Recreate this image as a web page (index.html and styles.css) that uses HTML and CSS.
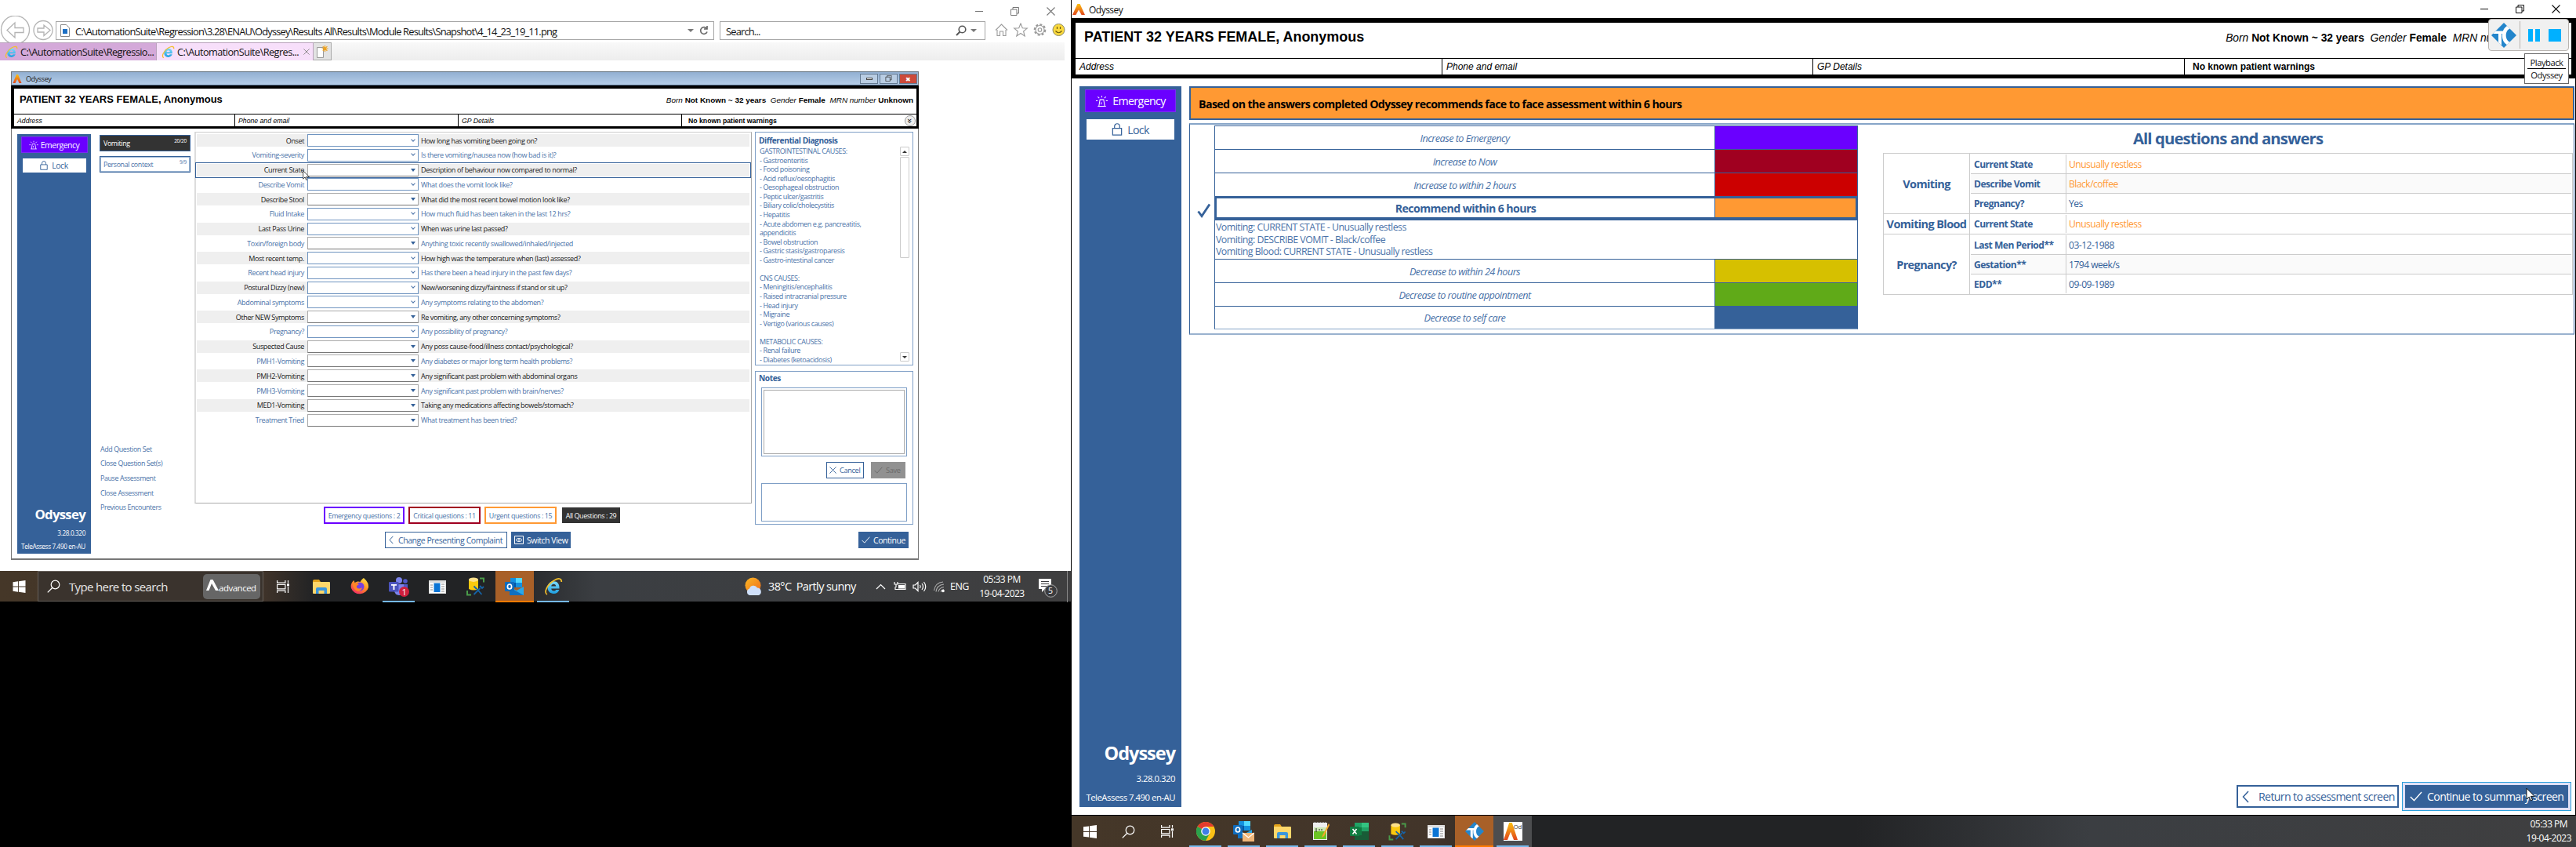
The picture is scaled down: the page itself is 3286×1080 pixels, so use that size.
FILE: index.html
```html
<!DOCTYPE html>
<html lang="en">
<head>
<meta charset="utf-8">
<title>Odyssey</title>
<link rel="stylesheet" href="styles.css">
</head>
<body>
<svg class="defs" width="0" height="0">
  <defs>
    <linearGradient id="flame" x1="0" y1="0" x2="0" y2="1"><stop offset="0" stop-color="#fdc010"/><stop offset="1" stop-color="#e0461c"/></linearGradient>
    <linearGradient id="ieblue" x1="0" y1="0" x2="0" y2="1"><stop offset="0" stop-color="#7fdcfb"/><stop offset="1" stop-color="#1e9fe0"/></linearGradient>
    <linearGradient id="fire" x1="0.8" y1="0" x2="0.2" y2="1"><stop offset="0" stop-color="#ffe040"/><stop offset=".5" stop-color="#ff8a25"/><stop offset="1" stop-color="#f5246c"/></linearGradient>
    <linearGradient id="sun" x1="0" y1="0" x2="1" y2="1"><stop offset="0" stop-color="#fbb824"/><stop offset="1" stop-color="#ef6c1a"/></linearGradient>
    <clipPath id="diamond"><path d="M16 0 32 16 16 32 0 16z"/></clipPath>
  </defs>
  <symbol id="logo" viewBox="0 0 16 16"><path d="M6.4 0h3.2L16 16h-4.400L8 8.500 4.400 16H0z" fill="url(#flame)"/></symbol>
  <symbol id="ie" viewBox="0 0 24 24"><path d="M19.500 14.500H9.200c.3 2 1.500 3 3.200 3 1.300 0 2.200-.5 2.800-1.500h4.200c-1 3-3.600 5-7.100 5-4.600 0-7.800-3.200-7.800-7.900 0-4.600 3.300-7.900 7.800-7.900 4.700 0 7.600 3.300 7.200 9.300zM9.200 11.500h6c-.2-1.700-1.300-2.700-2.900-2.700s-2.700 1-3.100 2.700z" fill="url(#ieblue)"/><path d="M4 22C-1 20 4 9 13 4c5-3 9.500-3 9.300 2" fill="none" stroke="#f2bf2c" stroke-width="1.700"/></symbol>
  <symbol id="alarm" viewBox="0 0 17 17"><path d="M3 15.500h11M4.500 15.500 6 6.500h5l1.500 9M8.500 1v2.500M3 2.500l2 2M14 2.500l-2 2M.5 8H3M14 8h2.500M8 10l-.5 3" fill="none" stroke="currentColor" stroke-width="1.100"/></symbol>
  <symbol id="lock" viewBox="0 0 14 17"><path d="M1 7h12v9H1zM3.500 7V4.500a3.500 3.700 0 0 1 7 0V7" fill="none" stroke="currentColor" stroke-width="1.300"/></symbol>
  <symbol id="check" viewBox="0 0 16 13"><path d="M.8 7 5.500 11.800 15 1" fill="none" stroke="currentColor" stroke-width="1.400"/></symbol>
  <symbol id="back" viewBox="0 0 9 16"><path d="M8 1 1.500 8 8 15" fill="none" stroke="currentColor" stroke-width="1.500"/></symbol>
  <symbol id="cursor" viewBox="0 0 13 20"><path d="M1 1v15l3.500-3.200L6.800 18l2.400-1-2.300-5H12z" fill="#fff" stroke="#000" stroke-width="1"/></symbol>
  <symbol id="win" viewBox="0 0 16 16"><path d="M0 2.200 6.600 1.300v6.200H0zM7.500 1.200 16 0v7.500H7.500zM0 8.400h6.600v6.300L0 13.800zM7.500 8.400H16V16l-8.500-1.200z" fill="#fff"/></symbol>
  <symbol id="search" viewBox="0 0 17 17"><circle cx="10.500" cy="6.500" r="5.300" fill="none" stroke="#fff" stroke-width="1.200"/><path d="M6.700 10.500.8 16.400" stroke="#fff" stroke-width="1.300"/></symbol>
  <symbol id="task" viewBox="0 0 16 16"><path d="M.6 0v3.200h10.300V0M.6 5.500h10.300v5.300H.6zM.6 16v-2.800h10.300V16M14.500 0v3.500M14.500 8v8" fill="none" stroke="#fff" stroke-width="1.200"/><path d="M13 4.300h3v3h-3z" fill="#fff"/></symbol>
  <symbol id="folder" viewBox="0 0 22 18"><path d="M0 2a2 2 0 0 1 2-2h6l2 3v14H0z" fill="#e2a21b"/><rect y="3" width="22" height="15" rx="1" fill="#fdd76b"/><path d="M4 18v-6q0-2 2-2h10q2 0 2 2v6h-3.500v-4h-7v4z" fill="#3a96dd"/></symbol>
  <symbol id="firefox" viewBox="0 0 24 24"><path d="M17 1c3 3 6.500 6 6 12a11.500 11 0 0 1-22 1C0 9 2 6 4.500 4l1 3c2-1.500 5-2 7-1 1-2 2.500-4 4.500-5z" fill="url(#fire)"/><circle cx="12" cy="12" r="5.500" fill="#7540e0"/><path d="M3 8c3-2 5-1 8 1l-3 2c-1 3 3 5 7 2-1 5-6 6-9 3-2-2-3-5-3-8z" fill="#ff8526"/></symbol>
  <symbol id="teams" viewBox="0 0 26 25"><circle cx="13" cy="4" r="4" fill="#7b83eb"/><circle cx="21" cy="5" r="2.800" fill="#5059c9"/><path d="M16 9h8v7a5 5 0 0 1-8 4z" fill="#5059c9"/><path d="M7 9h12v8a6 6 0 0 1-12 0z" fill="#7b83eb"/><rect y="6" width="12.500" height="12.500" rx="1" fill="#4b53bc"/><path d="M3 9h7v1.800H7.400V16H5.500v-5.200H3z" fill="#fff"/><circle cx="19.500" cy="18.500" r="6.500" fill="#cf1f3c"/></symbol>
  <symbol id="app" viewBox="0 0 22 17"><path d="M0 0h22v17H0z" fill="#ddd"/><path d="M1 3h20v13H1z" fill="#fff"/><path d="M6.500 3.500h8v11.500h-8z" fill="#0a74d4"/><path d="M2 6h3M2 9h3M2 12h3M16 5h4M16 8h4M16 11h4M16 14h4" stroke="#888"/></symbol>
  <symbol id="db" viewBox="0 0 24 24"><path d="M3 3v12q6 3 12 0V3z" fill="#fbc90e"/><ellipse cx="9" cy="3.200" rx="6" ry="2.700" fill="#fce08a"/><path d="M17 1.500h5v5M1 17v5.500h5" fill="none" stroke="#4a9c4a" stroke-width="2"/><path d="m9.500 22 8-8M12.500 14l7 8M9.500 11.500l3 3M17 11l3 3 2-2" stroke="#1664a8" stroke-width="1.800" fill="none"/></symbol>
  <symbol id="outlook" viewBox="0 0 24 22"><path d="M7 0h15v12H7z" fill="#1490df"/><path d="M14 0h8v6h-8z" fill="#50d9ff"/><path d="M7 6h7v6H7z" fill="#0358a7"/><path d="m6 11 9 5 9-5v11H6z" fill="#28a8ea"/><path d="m6 12 18 10H6z" fill="#1070c0"/><rect y="5" width="12" height="12" rx="1" fill="#0f6cbd"/><ellipse cx="6" cy="11" rx="2.600" ry="3" fill="none" stroke="#fff" stroke-width="1.700"/></symbol>
  <symbol id="tc" viewBox="0 0 32 32"><g clip-path="url(#diamond)"><path d="M0 0h32v32H0z" fill="#2385cb"/><path d="M0 10.500h19V14h-6v14H9V14H0zM27 7c-11-1-11 19 0 18l-3 4c-14-1-13-25 0-26z" fill="#fff"/></g></symbol>
  <symbol id="restore" viewBox="0 0 11 11"><path d="M.5 3h7.500v7.500H.5zM3 3V.5h7.500V8H8" fill="none" stroke="currentColor"/></symbol>
  <symbol id="cross" viewBox="0 0 11 11"><path d="m.5.5 10 10M10.500.5l-10 10" fill="none" stroke="currentColor" stroke-width="1.100"/></symbol>
</svg>

<main class="desk">
<section class="left">
  <div class="ie">
    <div class="caption"><i class="min"></i><svg width="11" height="11"><use href="#restore"/></svg><svg width="11" height="11"><use href="#cross"/></svg></div>
    <div class="nav">
      <svg class="arrows" width="70" height="34" viewBox="0 0 70 34"><g fill="none" stroke="#b4b4b4" stroke-width="1.300"><circle cx="19.500" cy="18" r="18"/><path d="M9 18.500 19 9v6.500h11v6H19V28zM64 18.500 56 12v4h-8v5h8v4.500z"/><circle cx="55" cy="18.500" r="12"/></g></svg>
      <div class="addr"><svg width="12" height="16" viewBox="0 0 12 16"><path d="M.5.5h7l4 4v11H.5z" fill="#fff" stroke="#888"/><path d="M3 6h6v6H3z" fill="#1c6fc4"/></svg><span>C:\AutomationSuite\Regression\3.28\ENAU\Odyssey\Results All\Results\Module Results\Snapshot\4_14_23_19_11.png</span><b class="dd"></b><svg width="12" height="14" viewBox="0 0 12 14"><path d="M9.500 4.500A4.300 4.300 0 1 0 10 8.500M10 1v4H6" fill="none" stroke="#6a6a6a" stroke-width="1.700"/></svg></div>
      <div class="find"><span>Search...</span><svg width="14" height="14" viewBox="0 0 14 14"><circle cx="8.500" cy="5.500" r="4.300" fill="none" stroke="#555" stroke-width="1.600"/><path d="M5.500 8.500 1 13" stroke="#555" stroke-width="2"/></svg><b class="dd"></b></div>
      <svg class="tools" width="92" height="18" viewBox="0 0 92 18"><g fill="#fff" stroke="#9a9a9a" stroke-width="1.100"><path d="M3 9v7.500h3.500V11h4v5.500H14V9M1 9.500 8.500 2l7.500 7.500"/><path d="m33 1 2.300 5.800 6 .3-4.700 3.900 1.600 6L33 13.500 27.800 17l1.600-6L24.700 7.100l6-.3z"/><circle cx="57.500" cy="9" r="6.700" stroke-dasharray="3 2.200" stroke-width="2.200"/><circle cx="57.500" cy="9" r="5.500"/><circle cx="57.500" cy="9" r="2.300"/></g><circle cx="81.500" cy="9" r="7.500" fill="#fbd93d" stroke="#8a8a6a"/><path d="M79.500 5v3M83.500 5v3M77.500 10.500q4 4.500 8 0" fill="none" stroke="#6a5a10" stroke-width="1.200"/></svg>
    </div>
    <div class="tabs">
      <div class="tab off"><svg width="17" height="17"><use href="#ie"/></svg><span>C:\AutomationSuite\Regressio...</span></div>
      <div class="tab on"><svg width="17" height="17"><use href="#ie"/></svg><span>C:\AutomationSuite\Regres...</span><svg class="x" width="8" height="8"><use href="#cross"/></svg></div>
      <div class="newtab"><svg width="16" height="17" viewBox="0 0 16 17"><path d="M1.500 2.500h8v13h-8z" fill="#fff" stroke="#999"/><path d="M11.500 0v8M7.500 4h8M8.800 1.200l5.600 5.600M14.400 1.200 8.800 6.800" stroke="#f0a21c" stroke-width="1.200"/></svg></div>
    </div>
  </div>

  <div class="snap">
    <div class="bar"><svg width="12" height="11"><use href="#logo"/></svg><span>Odyssey</span><i class="wb"><u></u></i><i class="wb"><svg width="9" height="8"><use href="#restore"/></svg></i><i class="wb red">✖</i></div>
    <div class="phead">
      <div class="who"><b>PATIENT 32 YEARS FEMALE, Anonymous</b><span class="facts"><em>Born</em> <b>Not Known ~ 32 years</b>&nbsp; <em>Gender</em> <b>Female</b>&nbsp; <em>MRN number</em> <b>Unknown</b></span></div>
      <div class="cells"><em>Address</em><em>Phone and email</em><em>GP Details</em><b>No known patient warnings</b><i>»</i></div>
    </div>
    <div class="work">
      <aside class="side">
        <div class="emer"><svg width="12" height="12"><use href="#alarm"/></svg><span>Emergency</span></div>
        <div class="lock"><svg width="10" height="12"><use href="#lock"/></svg><span>Lock</span></div>
        <div class="ver"><b>Odyssey</b><span>3.28.0.320</span><span>TeleAssess 7.490 en-AU</span></div>
      </aside>
      <nav class="sets">
        <div class="set dark"><span>Vomiting</span><sup>20/20</sup></div>
        <div class="set"><span>Personal context</span><sup>9/9</sup></div>
        <div class="links"><span>Add Question Set</span><span>Close Question Set(s)</span><span>Pause Assessment</span><span>Close Assessment</span><span>Previous Encounters</span></div>
      </nav>
      <div class="mid">
        <div class="qs">
          <div class="q"><span>Onset</span><i class="a"></i><span>How long has vomiting been going on?</span></div>
          <div class="q"><span>Vomiting-severity</span><i class="a"></i><span>Is there vomiting/nausea now (how bad is it)?</span></div>
          <div class="q cur"><span>Current State</span><i></i><span>Description of behaviour now compared to normal?</span><svg class="ptr" width="9" height="14"><use href="#cursor"/></svg></div>
          <div class="q"><span>Describe Vomit</span><i class="a"></i><span>What does the vomit look like?</span></div>
          <div class="q"><span>Describe Stool</span><i></i><span>What did the most recent bowel motion look like?</span></div>
          <div class="q"><span>Fluid Intake</span><i class="a"></i><span>How much fluid has been taken in the last 12 hrs?</span></div>
          <div class="q"><span>Last Pass Urine</span><i class="a"></i><span>When was urine last passed?</span></div>
          <div class="q"><span>Toxin/foreign body</span><i></i><span>Anything toxic recently swallowed/inhaled/injected</span></div>
          <div class="q"><span>Most recent temp.</span><i class="a"></i><span>How high was the temperature when (last) assessed?</span></div>
          <div class="q"><span>Recent head injury</span><i class="a"></i><span>Has there been a head injury in the past few days?</span></div>
          <div class="q"><span>Postural Dizzy (new)</span><i class="a"></i><span>New/worsening dizzy/faintness if stand or sit up?</span></div>
          <div class="q"><span>Abdominal symptoms</span><i class="a"></i><span>Any symptoms relating to the abdomen?</span></div>
          <div class="q"><span>Other NEW Symptoms</span><i></i><span>Re vomiting, any other concerning symptoms?</span></div>
          <div class="q"><span>Pregnancy?</span><i class="a"></i><span>Any possibility of pregnancy?</span></div>
          <div class="q"><span>Suspected Cause</span><i></i><span>Any poss cause-food/illness contact/psychological?</span></div>
          <div class="q"><span>PMH1-Vomiting</span><i></i><span>Any diabetes or major long term health problems?</span></div>
          <div class="q"><span>PMH2-Vomiting</span><i></i><span>Any significant past problem with abdominal organs</span></div>
          <div class="q"><span>PMH3-Vomiting</span><i></i><span>Any significant past problem with brain/nerves?</span></div>
          <div class="q"><span>MED1-Vomiting</span><i></i><span>Taking any medications affecting bowels/stomach?</span></div>
          <div class="q"><span>Treatment Tried</span><i></i><span>What treatment has been tried?</span></div>
        </div>
        <div class="filters"><span class="f1"><b>Emergency questions : 2</b></span><span class="f2"><b>Critical questions : 11</b></span><span class="f3"><b>Urgent questions : 15</b></span><span class="f4"><b>All Questions : 29</b></span></div>
        <div class="acts"><span class="btn chg"><svg width="6" height="11"><use href="#back"/></svg><b>Change Presenting Complaint</b></span><span class="btn fill"><svg width="12" height="11" viewBox="0 0 12 11"><path d="M.5.5h11v10H.5z" fill="none" stroke="#fff"/><ellipse cx="6" cy="5.500" rx="3.500" ry="2" fill="none" stroke="#fff"/><circle cx="6" cy="5.500" r="1" fill="#fff"/></svg><b>Switch View</b></span></div>
      </div>
      <div class="rail">
        <div class="diff"><h4>Differential Diagnosis</h4>
<pre>GASTROINTESTINAL CAUSES:
- Gastroenteritis
- Food poisoning
- Acid reflux/oesophagitis
- Oesophageal obstruction
- Peptic ulcer/gastritis
- Biliary colic/cholecystitis
- Hepatitis
- Acute abdomen e.g. pancreatitis,
appendicitis
- Bowel obstruction
- Gastric stasis/gastroparesis
- Gastro-intestinal cancer

CNS CAUSES:
- Meningitis/encephalitis
- Raised intracranial pressure
- Head injury
- Migraine
- Vertigo (various causes)

METABOLIC CAUSES:
- Renal failure
- Diabetes (ketoacidosis)</pre>
          <div class="scroll"><i class="up"></i><i class="thumb"></i><i class="down"></i></div>
        </div>
        <div class="notes"><h4>Notes</h4><div class="ta"><div></div></div>
          <div class="nb"><span class="btn"><svg width="9" height="9"><use href="#cross"/></svg><b>Cancel</b></span><span class="btn grey"><svg width="11" height="9"><use href="#check"/></svg><b>Save</b></span></div>
          <div class="box"></div></div>
        <span class="btn fill cont"><svg width="11" height="9"><use href="#check"/></svg><b>Continue</b></span>
      </div>
    </div>
  </div>

  <footer class="tb tbl">
    <div class="slot start"><svg width="17" height="16"><use href="#win"/></svg></div>
    <div class="sbox"><svg width="17" height="17"><use href="#search"/></svg><span>Type here to search</span><div class="chip"><svg width="16" height="14" viewBox="0 0 16 14"><path d="M5.500 0h3L16 14h-4L7 5l-3.500 9H0z" fill="#fff"/></svg><span>advanced</span></div></div>
    <div class="slot"><svg width="16" height="16"><use href="#task"/></svg></div>
    <div class="slot"><svg width="22" height="18"><use href="#folder"/></svg></div>
    <div class="slot"><svg width="24" height="24"><use href="#firefox"/></svg></div>
    <div class="slot run"><svg width="26" height="25"><use href="#teams"/></svg><small>1</small></div>
    <div class="slot"><svg width="22" height="17"><use href="#app"/></svg></div>
    <div class="slot"><svg width="24" height="24"><use href="#db"/></svg></div>
    <div class="slot hot"><svg width="24" height="22"><use href="#outlook"/></svg></div>
    <div class="slot run"><svg width="24" height="24"><use href="#ie"/></svg></div>
    <div class="tray">
      <svg width="24" height="24" viewBox="0 0 24 24"><circle cx="10.500" cy="10.500" r="10" fill="url(#sun)"/><path d="M6 23a4.500 4.500 0 0 1 0-8.500 5.500 5.500 0 0 1 10-1 5 5 0 0 1 2 9.500z" fill="#cfe0fa"/></svg>
      <span class="wx">38°C&nbsp; Partly sunny</span>
      <svg class="ic" width="105" height="18" viewBox="0 0 105 18"><g fill="none" stroke="#fff" stroke-width="1.200"><path d="M1 12 6.500 6.500 12 12"/><path d="M28 5.500h10v7H25v-3M24 3v3h4V3M26 6v4"/><path d="M29.500 7.500h7v3.500h-7z" fill="#fff"/><path d="M48 7h2.500L54 3.500v11L50.500 11H48zM56.500 7q1.500 2 0 4M59 5q3 4 0 8M61.500 3q4.500 6 0 12"/><path d="M77 15.500Q78 7 87 6M80 15.500q1-5 7-6M83 15.500q1-2.500 4-3M74.500 14Q76 4 86 3" stroke="#aaa"/><circle cx="86" cy="14.500" r="1.200" fill="#fff"/></g></svg>
      <span class="eng">ENG</span>
      <div class="clock"><span>05:33 PM</span><span>19-04-2023</span></div>
      <div class="note"><svg width="24" height="24" viewBox="0 0 24 24"><path d="M0 0h16v13H8l-4 4v-4H0z" fill="#fff"/><path d="M3 3.500h10M3 6.500h10M3 9.500h7" stroke="#3b3c3f"/><circle cx="15.500" cy="15.500" r="7.800" fill="#3b3c3f" stroke="#aaa"/></svg><small>5</small></div>
      <i class="peek"></i>
    </div>
  </footer>
</section>

<section class="right">
  <div class="title"><svg width="16" height="14" viewBox="0 0 16 16" preserveAspectRatio="none"><use href="#logo"/></svg><span>Odyssey</span><i class="min"></i><svg width="11" height="11"><use href="#restore"/></svg><svg width="11" height="11"><use href="#cross"/></svg></div>
  <div class="phead big">
    <div class="who"><b>PATIENT 32 YEARS FEMALE, Anonymous</b><span class="facts"><em>Born</em> <b>Not Known ~ 32 years</b>&nbsp; <em>Gender</em> <b>Female</b>&nbsp; <em>MRN number</em></span></div>
    <div class="cells"><em>Address</em><em>Phone and email</em><em>GP Details</em><b>No known patient warnings</b></div>
  </div>
  <div class="stage">
    <aside class="side large">
      <div class="emer"><svg width="17" height="16"><use href="#alarm"/></svg><span>Emergency</span></div>
      <div class="lock"><svg width="14" height="16"><use href="#lock"/></svg><span>Lock</span></div>
      <div class="ver"><b>Odyssey</b><span>3.28.0.320</span><span>TeleAssess 7.490 en-AU</span></div>
    </aside>
    <div class="main">
      <div class="banner"><b>Based on the answers completed Odyssey recommends face to face assessment within 6 hours</b></div>
      <div class="panel">
        <div class="tick"><svg width="18" height="19" viewBox="0 0 18 19"><path d="M1.500 10.500 6 16.500 16 1.500" fill="none" stroke="#356199" stroke-width="2.800"/></svg></div>
        <div class="levels">
          <div class="lv"><em>Increase to Emergency</em><i class="c1"></i></div>
          <div class="lv"><em>Increase to Now</em><i class="c2"></i></div>
          <div class="lv"><em>Increase to within 2 hours</em><i class="c3"></i></div>
          <div class="lv rec"><b>Recommend within 6 hours</b><i class="c4"></i></div>
          <div class="why"><span>Vomiting: CURRENT STATE - Unusually restless</span><span>Vomiting: DESCRIBE VOMIT - Black/coffee</span><span>Vomiting Blood: CURRENT STATE - Unusually restless</span></div>
          <div class="lv"><em>Decrease to within 24 hours</em><i class="c5"></i></div>
          <div class="lv"><em>Decrease to routine appointment</em><i class="c6"></i></div>
          <div class="lv last"><em>Decrease to self care</em><i class="c7"></i></div>
        </div>
        <div class="qa">
          <h2>All questions and answers</h2>
          <div class="grp g3"><b>Vomiting</b><div><p><b>Current State</b><span class="o">Unusually restless</span></p><p class="alt"><b>Describe Vomit</b><span class="o">Black/coffee</span></p><p><b>Pregnancy?</b><span>Yes</span></p></div></div>
          <div class="grp g1"><b>Vomiting Blood</b><div><p><b>Current State</b><span class="o">Unusually restless</span></p></div></div>
          <div class="grp g3"><b>Pregnancy?</b><div><p><b>Last Men Period**</b><span>03-12-1988</span></p><p class="alt"><b>Gestation**</b><span>1794 week/s</span></p><p><b>EDD**</b><span>09-09-1989</span></p></div></div>
        </div>
      </div>
      <div class="foot">
        <span class="btn lg"><svg width="9" height="16"><use href="#back"/></svg><b>Return to assessment screen</b></span>
        <span class="halo"><span class="btn lg fill"><svg width="16" height="13"><use href="#check"/></svg><b>Continue to summary screen</b></span><svg class="ptr2" width="12" height="19"><use href="#cursor"/></svg></span>
      </div>
    </div>
  </div>
  <footer class="tb tbr">
    <div class="slot"><svg width="17" height="17"><use href="#win"/></svg></div>
    <div class="slot"><svg width="17" height="17"><use href="#search"/></svg></div>
    <div class="slot"><svg width="16" height="16"><use href="#task"/></svg></div>
    <div class="slot run"><svg width="24" height="24" viewBox="0 0 24 24"><circle cx="12" cy="12" r="12" fill="#fbc116"/><path d="M12 12 1.600 6A12 12 0 0 1 22.400 6z" fill="#e33b2e"/><path d="M12 12 1.600 6A12 12 0 0 0 12 24l5-9z" fill="#2ba24c"/><path d="M12 6h10.400L17 15z" fill="#fbc116"/><circle cx="12" cy="12" r="5.800" fill="#fff"/><circle cx="12" cy="12" r="4.500" fill="#3f7ee8"/></svg></div>
    <div class="slot run"><svg width="27" height="26" viewBox="0 0 27 26"><svg width="24" height="22"><use href="#outlook"/></svg><path d="M12 15h15v11H12z" fill="#f0b77a"/><path d="m12 15 7.500 6 7.500-6" fill="none" stroke="#fff" stroke-width="1.300"/></svg></div>
    <div class="slot run"><svg width="22" height="18"><use href="#folder"/></svg></div>
    <div class="slot run"><svg width="22" height="24" viewBox="0 0 22 24"><path d="M1 1h18v22H1z" fill="#eee"/><path d="M2 12h16v10H2z" fill="#6cc424"/><path d="M2 7h16v5H2z" fill="#cde8b4"/><path d="M5 8v5M8 10h2M11 10h2" stroke="#222"/><path d="M21 2 13 17l-1 3 3-2 7-14z" fill="#f3a62a"/><path d="M2 .5h16" stroke="#888" stroke-dasharray="1 1"/></svg></div>
    <div class="slot run"><svg width="24" height="22" viewBox="0 0 24 22"><path d="M6 0h18v22H6z" fill="#21a366"/><path d="M15 0h9v6h-9z" fill="#33c481"/><path d="M6 6h9v10H6z" fill="#107c41"/><path d="M15 11h9v11H6v-6h9z" fill="#185c37"/><rect y="5" width="12" height="12" rx="1" fill="#107c41"/><path d="m3.500 8 5 6.500M8.500 8l-5 6.500" stroke="#fff" stroke-width="1.600"/></svg></div>
    <div class="slot run"><svg width="24" height="23"><use href="#db"/></svg></div>
    <div class="slot run"><svg width="22" height="17"><use href="#app"/></svg></div>
    <div class="slot hot"><svg width="24" height="24"><use href="#tc"/></svg></div>
    <div class="slot run act"><div class="od"><svg width="18" height="22" viewBox="0 0 16 16" preserveAspectRatio="none"><use href="#logo"/></svg><small>Od</small></div></div>
    <div class="clock"><span>05:33 PM</span><span>19-04-2023</span></div>
  </footer>
  <div class="play"><svg width="32" height="32"><use href="#tc"/></svg><i class="sep"></i><i class="p"></i><i class="p"></i><i class="s"></i></div>
  <div class="tip"><span>Playback</span><span>Odyssey</span></div>
</section>
</main>
</body>
</html>
```
FILE: styles.css
```css
* { box-sizing: border-box; letter-spacing: -.043em; }
body { margin: 0; background: #000; font-family: "Open Sans", "Noto Sans", sans-serif; color: #356199; overflow: hidden; }
svg { display: block; flex: none; }
i, em { font-style: normal; }
.defs { position: absolute; }
.desk { display: grid; grid-template-columns: 1366px 1920px; width: 3286px; height: 1080px; }
.left { height: 768px; background: #fff; display: flex; flex-direction: column; width: 1366px; white-space: nowrap; }
.right { position: relative; height: 1080px; background: #fff; border-left: 1px solid #000; display: flex; flex-direction: column; white-space: nowrap; overflow: hidden; }

/* browser chrome */
.ie { height: 91px; flex: none; color: #111; }
.caption { height: 20px; display: flex; justify-content: flex-end; align-items: flex-end; gap: 35px; padding: 0 20px 0 0; color: #777; }
.min { width: 10px; height: 1px; background: currentColor; align-self: flex-end; margin-bottom: 5px; }
.nav { height: 34px; display: flex; }
.addr, .find { height: 24px; margin-top: 7px; border: 1px solid #a6a6a6; display: flex; align-items: center; font-size: 12.900px; }
.addr span, .find span { letter-spacing: -.064em; padding-top: 1px; }
.addr { width: 840px; margin-left: 1px; padding-left: 5px; gap: 7px; }
.addr .dd { margin-left: auto; }
.addr svg:last-child { margin: 0 6px 0 0; }
.find { width: 339px; margin-left: 7px; padding: 0 10px 0 7px; gap: 5px; }
.find svg { margin-left: auto; }
.dd { border: 4px solid transparent; border-top-color: #777; border-bottom: 0; }
.tools { margin: 9px 0 0 12px; }
.tabs { height: 23px; display: flex; background: linear-gradient(#f9f9f9, #ededed); width: 1358px; font-size: 12.700px; }
.tab { width: 200px; display: flex; align-items: center; gap: 3px; padding-left: 6px; border: 1px solid #b9a3bc; border-width: 1px 1px 0 0; }
.off { background: #d4a9d9; }
.on { background: #f7dffa; }
.x { margin-left: 3px; color: #777; }
.newtab { width: 23px; background: #e3e3e3; border: 1px solid #aaa; border-left: 0; padding: 3px 0 0 3px; }

/* snapshot window */
.snap { margin-left: 14px; width: 1158px; height: 623px; border: 1px solid #777; border-bottom-width: 2px; border-top-color: #5a6a78; }
.bar { height: 17px; display: flex; align-items: center; background: linear-gradient(#92b0d2, #b5cde8); padding: 0 0 0 1px; font-size: 9px; color: #222; border-bottom: 1px solid #4a6480; }
.bar span { margin-left: 5px; margin-right: auto; }
.wb { width: 23px; height: 13px; border: 1px solid #647a92; margin: 0 1px; display: flex; align-items: center; justify-content: center; font-size: 8px; color: #333; background: #b9cde3; }
.wb u { width: 8px; height: 3px; border: 1px solid #444; background: #fff; }
.red { background: #cc4a3a; color: #fff; }
.phead { background: #fff; border: solid #000; color: #000; font-family: "Liberation Sans", Arial, sans-serif; }
.phead * { letter-spacing: 0; }
.snap .phead { height: 55px; border-width: 4px 3px 3px 4px; margin: 0 -1px; }
.who { display: flex; justify-content: space-between; align-items: center; }
.snap .who { height: 32px; padding: 0 4px 6px 7px; font-size: 13px; }
.snap .facts { font-size: 9.950px; padding-top: 2px; }
.phead em { font-style: italic; }
.cells { display: grid; align-items: center; border-top: 1px solid #000; }
.snap .cells { height: 16px; grid-template-columns: 281px 285px 285px 285px 15px; font-size: 8.700px; }
.cells > * { height: 100%; display: flex; align-items: center; }
.cells > * + * { border-left: 1px solid #000; }
.snap .cells > * { padding-left: 4px; }
.snap .cells > b { padding-left: 8px; }
.snap .cells > i { padding: 0; width: 14px; height: 14px; border: 1px solid #999; border-radius: 7px; justify-content: center; transform: rotate(90deg); font-size: 11px; background: #eee; }
.work { display: flex; padding: 4px 0 0 7px; height: 548px; }

.side { background: #356199; display: flex; flex-direction: column; align-items: center; color: #fff; flex: none; }
.work .side { width: 94px; height: 535px; margin-top: 3px; padding-top: 3px; font-size: 10.400px; }
.side .emer, .side .lock { display: flex; align-items: center; justify-content: center; }
.emer { background: #6a00ff; border: 1px solid #7a2cf0; }
.lock { background: #fff; color: #356199; }
.work .emer { width: 85px; height: 21px; gap: 3px; }
.work .lock { width: 81px; height: 18px; gap: 5px; margin-top: 7px; }
.ver { margin-top: auto; align-self: stretch; display: flex; flex-direction: column; align-items: flex-end; }
.work .ver { padding: 0 7px 1px 0; font-size: 8.200px; line-height: 17px; }
.work .ver b { font-size: 16.800px; line-height: 26px; margin-bottom: 2px; }

.sets { width: 116px; margin-left: 11px; padding-top: 4px; display: flex; flex-direction: column; height: 500px; font-size: 8.900px; flex: none; }
.set { height: 21px; border: 1px solid #356199; display: flex; justify-content: space-between; padding: 0 4px; align-items: center; margin-bottom: 6px; color: #4a72a8; outline: 1px solid #9db7d4; outline-offset: -2px; }
.dark { background: #333; color: #fff; outline: 0; }
.set sup { font-size: 6.500px; line-height: 8px; align-self: flex-start; padding-top: 3px; }
.links { margin-top: auto; display: flex; flex-direction: column; color: #4a72a8; padding-left: 1px; margin-bottom: 11px; }
.links span { line-height: 18.700px; height: 18.700px; }

.mid { width: 711px; margin-left: 5px; flex: none; }
.qs { height: 474px; border: 1px solid #aaa; border-left: 2px solid #ddd; border-top-color: #ccc; padding: 2px 2px 0 1px; font-size: 9.050px; }
.q { position: relative; height: 16px; margin-bottom: 2.780px; display: grid; grid-template-columns: 141px 142px 1fr; align-items: center; color: #4a72a8; }
.q:nth-child(odd) { background: #efefef; color: #181818; }
.q > span:first-child { text-align: right; padding-right: 4px; }
.q > span:nth-child(3) { padding-left: 3px; }
.q > i { height: 16px; border: 1px solid #aaa; border-bottom-color: #777; background: #fff; display: flex; align-items: center; justify-content: flex-end; padding-right: 3px; }
.q > i::after { content: ""; border: 3px solid transparent; border-top: 4px solid #356199; border-bottom: 0; }
.q > i.a { border-color: #6f94c0; }
.q > i.a::after { width: 3px; height: 3px; border: solid #4a72a8; border-width: 0 1px 1px 0; transform: rotate(45deg); margin: -3px 1px 0 0; }
.q.cur { outline: 1px solid #356199; outline-offset: 1px; }
.ptr { position: absolute; left: 135px; top: 8px; }
.filters { display: flex; gap: 5px; margin: 4px 0 0 165px; font-size: 8.900px; height: 22px; align-items: center; }
.filters span { height: 22px; border: 2px solid; display: flex; align-items: center; justify-content: center; }
.filters b, .btn b { font-weight: 400; }
.filters b { color: #4a72a8; }
.filters .f1 { border-color: #6a00ff; width: 103px; }
.filters .f2 { border-color: #a00020; width: 92px; }
.filters .f3 { border-color: #ff9933; width: 92px; }
.filters .f4 { background: #333; border-color: #333; height: 20px; width: 74px; margin-left: 2px; }
.filters .f4 b { color: #fff; }
.acts { display: flex; gap: 5px; margin: 10px 0 0 243px; }
.btn { display: inline-flex; align-items: center; border: 1.500px solid #356199; height: 21px; background: #fff; color: #356199; padding: 0 4px; gap: 6px; font-size: 10.500px; }
.btn.fill { background: #356199; color: #fff; gap: 4px; }
.acts .chg { width: 156px; }
.acts .fill { width: 76px; padding: 0 3px; }

.rail { width: 202px; margin-left: 4px; display: flex; flex-direction: column; flex: none; }
.diff, .notes { border: 1px solid #7f9fc6; flex: none; }
.diff { height: 298px; position: relative; padding: 3px 0 0 4px; overflow: hidden; }
h4 { margin: 0; font-size: 10.200px; line-height: 15px; }
pre { margin: 0 0 0 1px; font: 9px/11.560px "Open Sans", sans-serif; color: #4a72a8; }
.scroll { position: absolute; right: 4px; top: 18px; width: 12px; height: 274px; display: flex; flex-direction: column; }
.scroll i { border: 1px solid #ccc; display: flex; align-items: center; justify-content: center; border-radius: 1px; }
.up, .down { height: 12px; }
.up::after, .down::after { content: ""; border: 3px solid transparent; border-bottom: 3px solid #333; border-top: 0; }
.down::after { border-top: 3px solid #333; border-bottom: 0; }
.thumb { height: 129px; margin: 1px 0 auto; }
.notes { margin-top: 7px; height: 196px; padding: 0 7px; }
.notes h4 { margin-left: -3px; line-height: 16px; }
.ta { border: 1px solid #7f9fc6; padding: 2px; height: 88px; margin-top: 4px; }
.ta div { border: 1px solid #aaa; height: 82px; }
.nb { display: flex; justify-content: flex-end; gap: 9px; margin: 7px 2px 6px 0; }
.nb .btn { font-size: 9.300px; gap: 4px; padding: 0 3px; width: 48px; }
.nb .grey { background: #919191; border-color: #919191; color: #6a6a6a; width: 44px; }
.box { border: 1px solid #7f9fc6; height: 49px; }
.cont { margin: 9px 0 0 132px; width: 64px; padding: 0 3px; }

/* taskbars */
.tb { color: #fff; display: flex; }
.tbl { height: 40px; margin-top: auto; background: linear-gradient(90deg, #453728 0, #42352a 330px, #222325 400px, #222325 640px, #3b3e42 760px, #3f3f40 1366px); border-bottom: 1px solid #000; }
.tbl .slot { width: 49.300px; }
.slot { height: 40px; position: relative; display: flex; align-items: center; justify-content: center; }
.tbl .start { width: 48px; }
.slot.run::after, .slot.hot::after { content: ""; position: absolute; left: 4px; right: 4px; bottom: 0; height: 2px; background: #76b9ed; }
.slot.hot { background: #a86028; }
.slot.hot::after { left: 0; right: 0; background: #ff7a00; }
.slot small { position: absolute; left: 25px; top: 18px; width: 13px; text-align: center; font-size: 11px; line-height: 18px; }
.sbox { width: 288px; background: #3a332d; border: 1px solid #66605a; display: flex; align-items: center; padding: 0 3px 0 11px; font-size: 15px; color: #e6e6e6; }
.sbox > span { margin-left: 11px; }
.chip { margin-left: auto; width: 73px; height: 32px; border-radius: 5px; background: #666; display: flex; align-items: center; font-size: 11.500px; padding: 3px 0 0 4px; color: #fff; }
.chip svg { margin-top: -6px; }
.tray { margin-left: auto; display: flex; align-items: center; }
.wx { margin: 0 24px 0 6px; font-size: 14.500px; width: 113px; }
.eng { margin: 0 14px 0 -10px; font-size: 12.500px; width: 23px; }
.clock { display: flex; flex-direction: column; align-items: center; line-height: 18px; font-size: 12px; padding-top: 2px; align-self: flex-start; }
.tray .clock { width: 58px; }
.note { margin: 4px 12px 0 18px; position: relative; }
.note small { position: absolute; left: 12px; top: 8px; font-size: 10.500px; line-height: 15px; }
.peek { width: 5px; border-left: 1px solid #888; height: 40px; }

/* main window */
.title { height: 23px; flex: none; display: flex; align-items: center; padding: 0 20px 0 1px; color: #111; font-size: 12px; }
.title span { margin: 2px auto 0 5px; }
.title .min { margin: 0 35px 0 0; align-self: center; }
.title svg + svg { margin-left: 35px; }
.big { height: 77px; flex: none; border-width: 6px 6px 5px 5px; }
.big .who { height: 45px; padding: 0 0 9px 11px; font-size: 17.950px; justify-content: flex-start; }
.big .facts { font-size: 13.800px; padding-top: 3px; margin-left: 1099px; }
.big .cells { height: 21px; grid-template-columns: 467px 473px 474px 1fr; font-size: 12px; }
.big .cells > * { padding-left: 5px; }
.big .cells > b { padding-left: 10px; }
.stage { display: flex; padding: 10px 1px 0 10px; height: 940px; border-bottom: 1px solid #000; border-right: 1px solid #000; }
.large { width: 130px; height: 919px; padding-top: 4px; font-size: 14.200px; }
.large .emer { width: 116px; height: 29px; gap: 5px; }
.large .lock { width: 112px; height: 26px; gap: 6px; margin-top: 9px; }
.large .ver { font-size: 11.350px; line-height: 24px; padding: 0 8px 0 0; }
.large .ver b { font-size: 23.500px; line-height: 36px; margin-bottom: 3px; }
.main { margin-left: 10px; width: 1768px; display: flex; flex-direction: column; }
.banner { height: 43px; border: 2px solid #356199; background: #f93; color: #000; display: flex; align-items: center; padding: 2px 0 0 10px; font-size: 14.200px; }
.panel { margin-top: 4px; height: 270px; border: 1px solid #356199; border-top: 2px solid #86a5c8; border-bottom: 2px solid #9ab2cf; display: grid; grid-template-columns: 31px 821px 1fr; }
.tick { padding: 100px 0 0 9px; }
.levels { border: 1px solid #356199; border-bottom: 1px solid #86a5c8; height: 260px; margin-top: 1px; }
.lv { height: 30px; border-bottom: 1px solid #356199; display: grid; grid-template-columns: 637px 1fr; font-size: 12.700px; }
.lv > em, .lv > b { display: flex; align-items: center; justify-content: center; font-style: italic; color: #4a72a8; }
.lv > b { font-style: normal; color: #356199; }
.lv i { border-left: 1px solid #356199; }
.lv.rec { border: solid #356199; border-width: 3px 3px 4px 3px; margin: -1px -1px 0; height: 31px; font-size: 14.200px; grid-template-columns: 635px 1fr; }
.lv.last { height: 28px; border: 0; }
.why { height: 50px; border-bottom: 1px solid #356199; display: flex; flex-direction: column; font-size: 12.400px; line-height: 15.600px; padding: 1px 0 0 1px; color: #4a72a8; }
.c1 { background: #6a00ff; } .c2 { background: #a00020; } .c3 { background: #c00; } .c4 { background: #f93; } .c5 { background: #d6c000; } .c6 { background: #60aa18; } .c7 { background: #356199; }
.qa { margin: 0 1px 0 32px; }
h2 { margin: 0; height: 36px; text-align: center; font-size: 20.300px; line-height: 35px; }
.grp { display: grid; grid-template-columns: 110px 1fr; border: 1px solid #ccc; border-bottom: 0; }
.grp:last-child { border-bottom: 1px solid #ccc; }
.grp > b { display: flex; align-items: center; justify-content: center; font-size: 14.500px; border-right: 1px solid #ccc; }
.g3 { height: 77px; } .g1 { height: 26px; }
.grp:last-child { height: 78px; }
.grp > div { padding: 1px; display: flex; flex-direction: column; }
.grp p { flex: 1; margin: 0; display: grid; grid-template-columns: 121px 1fr; align-items: stretch; font-size: 12.100px; }
.grp p + p { border-top: 1px solid #ccc; }
.grp p > * { display: flex; align-items: center; padding-left: 4px; }
.grp p > span { border-left: 1px solid #ccc; padding-left: 3px; }
.alt { background: #fafafa; }
.grp .o { color: #f93; }
.foot { margin-top: auto; display: flex; justify-content: flex-end; align-items: center; padding: 0 4px 5px 0; gap: 4px; }
.lg { height: 29px; border-width: 2px; font-size: 14.100px; padding: 0 5px; gap: 12px; }
.foot > .lg { width: 207px; }
.lg.fill { width: 208px; gap: 6px; padding: 0 4px; }
.halo { position: relative; border: 1px solid #2a9fdc; background: #dfe0f6; padding: 3px; height: 37px; display: flex; width: 216px; }
.ptr2 { position: absolute; left: 157px; top: 6px; }
.tbr { height: 40px; margin-left: -1px; background: linear-gradient(90deg, #453728 0, #42352a 460px, #222325 580px, #222325 1000px, #3b3e42 1300px, #3f3f40 1920px); }
.tbr .slot { width: 49px; }
.act { background: #4c4d4f; }
.od { width: 24px; height: 24px; background: #fff; display: flex; align-items: center; position: relative; }
.od small { left: 13px; top: 0; font-size: 8px; line-height: 11px; color: #444; width: 11px; text-align: left; }
.tbr .clock { margin: 0 6px 0 auto; }
.play { position: absolute; left: 1807px; top: 24px; width: 103px; height: 41px; border: 1px solid #b8b4b0; border-radius: 4px; background: #f0f0f0; display: flex; align-items: center; padding-left: 3px; }
.play .sep { width: 1px; height: 35px; background: #b8b4b0; margin: 0 10px 0 4px; }
.play .p { width: 6px; height: 16px; background: #00b0ff; margin-right: 3px; }
.play .s { width: 16px; height: 16px; background: #00b0ff; margin-left: 8px; }
.tip { position: absolute; left: 1853px; top: 68px; width: 57px; height: 39px; border: 1px solid #666; background: #fff; color: #111; font-size: 11.200px; padding: 3px; display: flex; flex-direction: column; align-items: center; }
.tip span { line-height: 15px; }
.tip span:first-child { border-bottom: 1px solid #000; width: 49px; text-align: center; }
```
